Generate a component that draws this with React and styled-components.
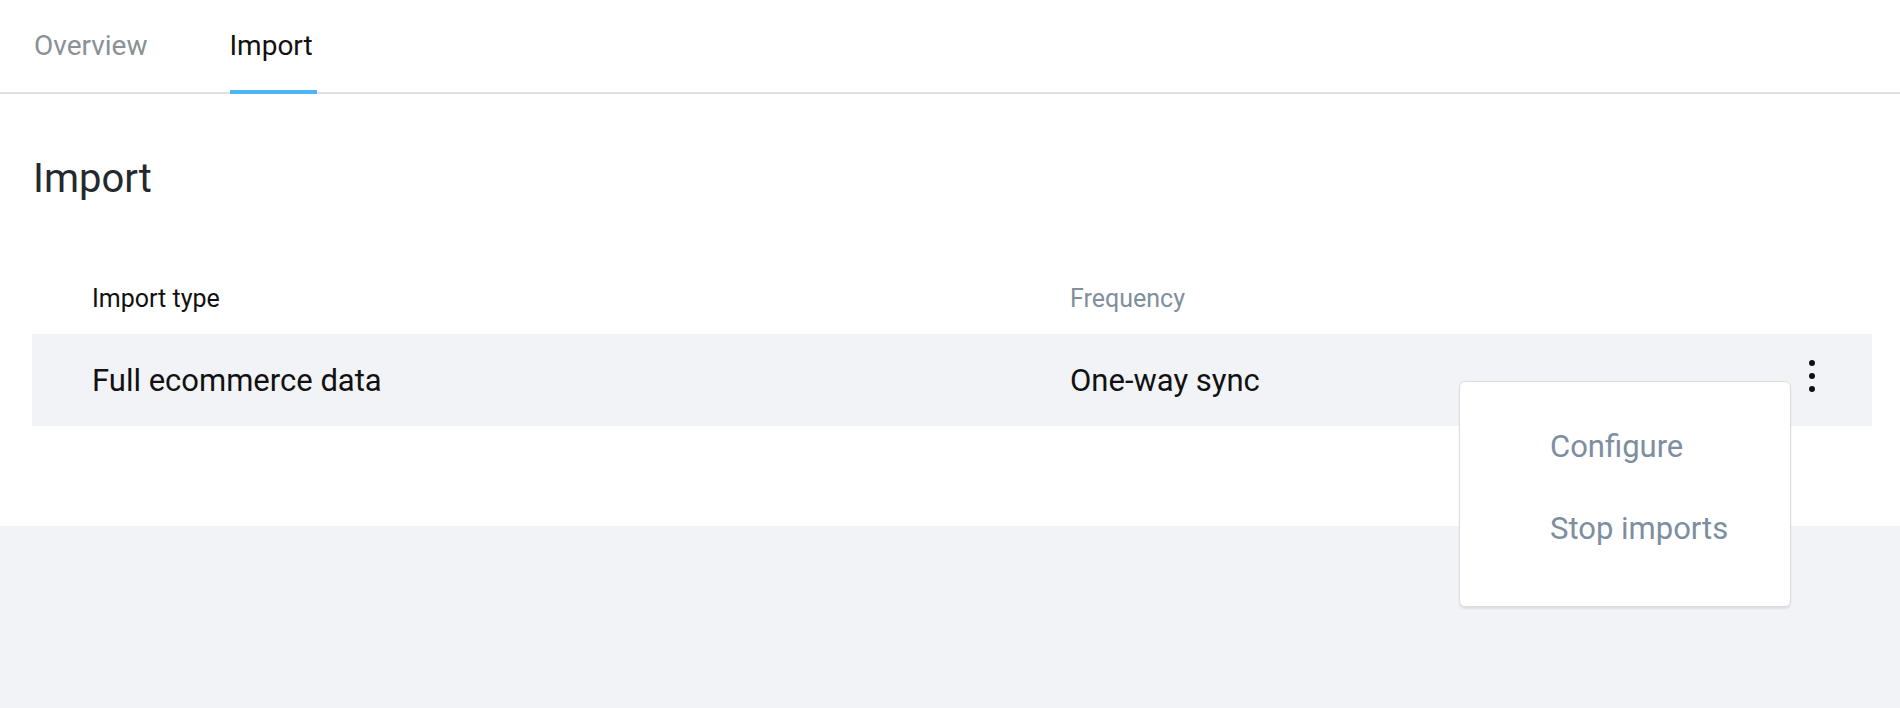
import React from "react";
import styled, { createGlobalStyle } from "styled-components";

const GlobalStyle = createGlobalStyle`
  html, body {
    margin: 0;
    padding: 0;
    background: #f2f3f7;
    font-family: Roboto, "Liberation Sans", Arial, sans-serif;
  }
  * {
    box-sizing: border-box;
  }
`;

const COLUMNS = "1037px 1fr 120px";

const KebabIcon = () => (
  <svg width="6" height="32" viewBox="0 0 6 32" aria-hidden="true">
    <circle cx="3" cy="3" r="3" fill="#111" />
    <circle cx="3" cy="16" r="3" fill="#111" />
    <circle cx="3" cy="29" r="3" fill="#111" />
  </svg>
);

export default function App() {
  return (
    <>
      <GlobalStyle />
      <Screen>
        <Page>
          <TabBar>
            <Tab>Overview</Tab>
            <Tab $active>Import</Tab>
          </TabBar>

          <Content>
            <Title>Import</Title>

            <Table>
              <HeadRow>
                <HeadCell $first>Import type</HeadCell>
                <HeadCell $muted>Frequency</HeadCell>
                <HeadCell />
              </HeadRow>

              <Row>
                <Cell $first>Full ecommerce data</Cell>
                <Cell>One-way sync</Cell>
                <ActionCell>
                  <KebabIcon />
                </ActionCell>

                <Menu>
                  <MenuItem>Configure</MenuItem>
                  <MenuItem>Stop imports</MenuItem>
                </Menu>
              </Row>
            </Table>
          </Content>
        </Page>
      </Screen>
    </>
  );
}

const Screen = styled.div`
  min-height: 100vh;
  background: #f2f3f7;
`;

const Page = styled.div`
  background: #ffffff;
`;

const TabBar = styled.nav`
  display: flex;
  gap: 78px;
  height: 94px;
  padding-left: 34px;
  border-bottom: 2px solid #e0e0e0;
`;

const Tab = styled.div`
  position: relative;
  padding: 29px 4px 0 0;
  font-size: 28px;
  color: ${(p) => (p.$active ? "#111111" : "#8a9096")};

  &::after {
    content: "";
    display: ${(p) => (p.$active ? "block" : "none")};
    position: absolute;
    left: 0;
    right: 0;
    bottom: -2px;
    height: 4px;
    background: #4db5f5;
  }
`;

const Content = styled.main`
  padding: 0 28px 100px 32px;
`;

const Title = styled.h1`
  margin: 61px 0 0 1px;
  font-size: 40px;
  font-weight: 400;
  line-height: 47px;
  color: #24292e;
`;

const Table = styled.div`
  margin-top: 82px;
`;

const HeadRow = styled.div`
  display: grid;
  grid-template-columns: ${COLUMNS};
  padding-bottom: 21px;
  font-size: 25px;
  line-height: 29px;
`;

const HeadCell = styled.div`
  padding-left: ${(p) => (p.$first ? "60px" : "1px")};
  color: ${(p) => (p.$muted ? "#7f8f9d" : "#111111")};
`;

const Row = styled.div`
  position: relative;
  display: grid;
  grid-template-columns: ${COLUMNS};
  align-items: center;
  height: 92px;
  background: #f2f3f7;
  font-size: 31px;
  color: #111111;
`;

const Cell = styled.div`
  padding-left: ${(p) => (p.$first ? "60px" : "1px")};
`;

const ActionCell = styled.div`
  align-self: start;
  display: flex;
  justify-content: center;
  padding-top: 26px;
`;

const Menu = styled.div`
  position: absolute;
  top: 47px;
  right: 81px;
  width: 332px;
  height: 226px;
  padding: 24px 0 36px;
  background: #ffffff;
  border: 1px solid #dcdde0;
  border-radius: 6px;
  box-shadow: 0 2px 2px rgba(0, 0, 0, 0.08);
  z-index: 2;
`;

const MenuItem = styled.div`
  height: 82px;
  line-height: 82px;
  padding-left: 90px;
  font-size: 31px;
  color: #7c8ea0;
  cursor: pointer;
`;
